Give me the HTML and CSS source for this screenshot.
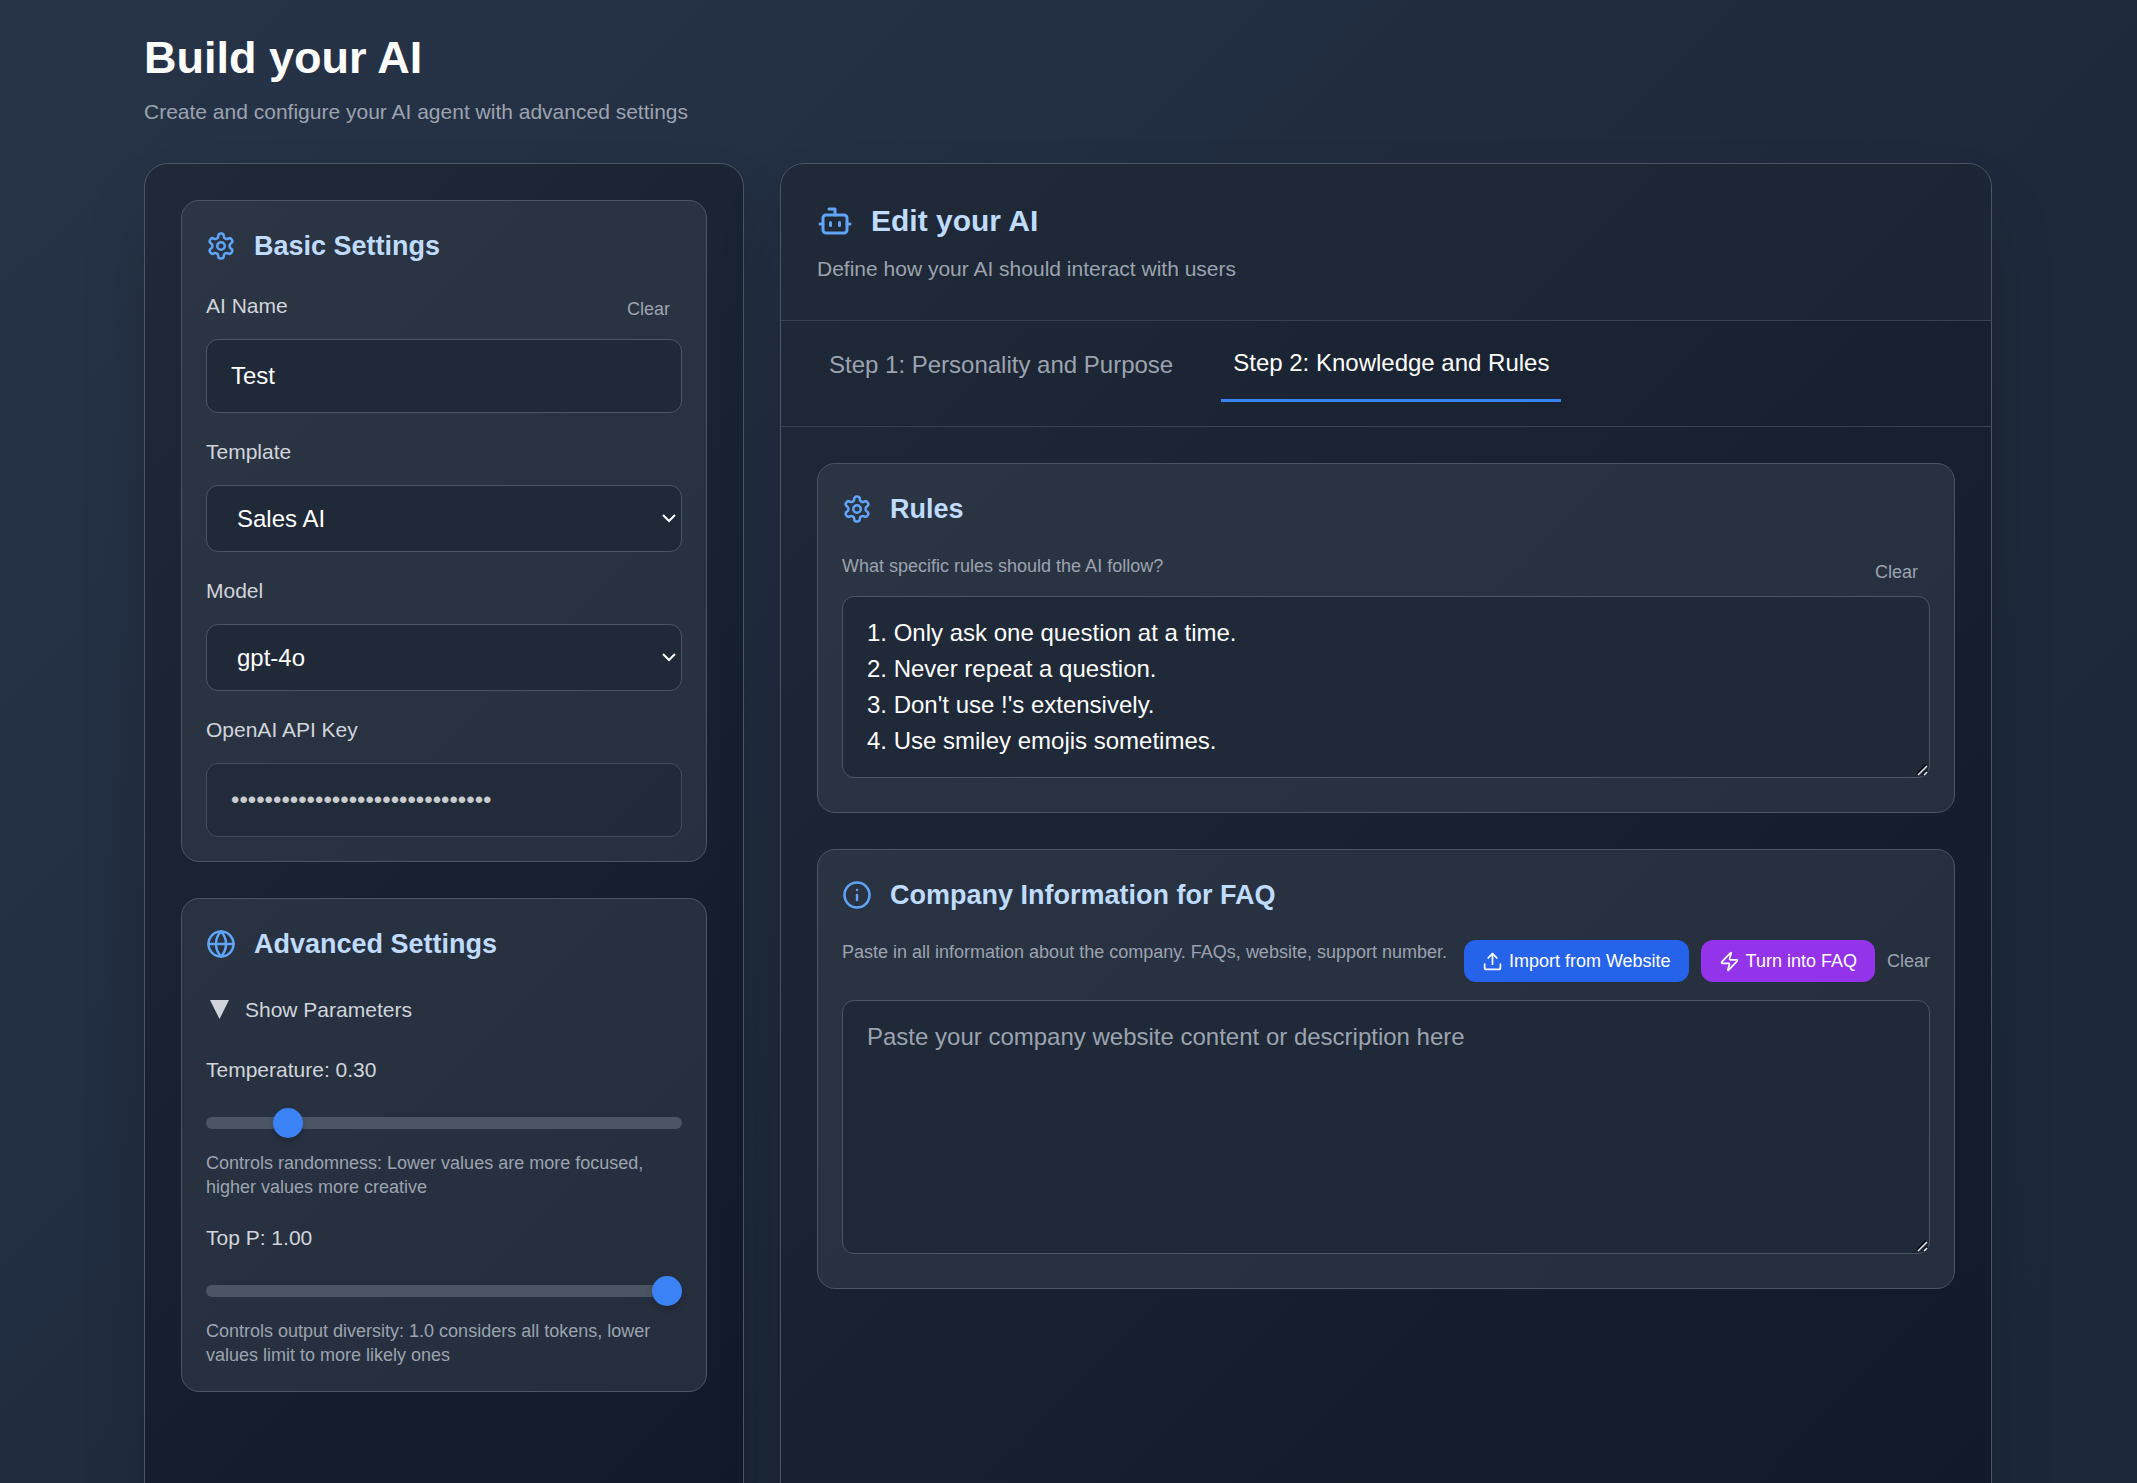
FILE: index.html
```html
<!DOCTYPE html>
<html lang="en">
<head>
<meta charset="utf-8">
<meta name="viewport" content="width=device-width, initial-scale=1">
<title>Build your AI</title>
<link rel="stylesheet" href="styles.css">
</head>
<body>
<svg class="sprite" aria-hidden="true">
  <symbol id="icon-gear" viewBox="0 0 24 24"><path d="M12.22 2h-.44a2 2 0 0 0-2 2v.18a2 2 0 0 1-1 1.73l-.43.25a2 2 0 0 1-2 0l-.15-.08a2 2 0 0 0-2.73.73l-.22.38a2 2 0 0 0 .73 2.73l.15.1a2 2 0 0 1 1 1.72v.51a2 2 0 0 1-1 1.74l-.15.09a2 2 0 0 0-.73 2.73l.22.38a2 2 0 0 0 2.73.73l.15-.08a2 2 0 0 1 2 0l.43.25a2 2 0 0 1 1 1.73V20a2 2 0 0 0 2 2h.44a2 2 0 0 0 2-2v-.18a2 2 0 0 1 1-1.73l.43-.25a2 2 0 0 1 2 0l.15.08a2 2 0 0 0 2.73-.73l.22-.39a2 2 0 0 0-.73-2.73l-.15-.08a2 2 0 0 1-1-1.74v-.5a2 2 0 0 1 1-1.74l.15-.09a2 2 0 0 0 .73-2.73l-.22-.38a2 2 0 0 0-2.73-.73l-.15.08a2 2 0 0 1-2 0l-.43-.25a2 2 0 0 1-1-1.73V4a2 2 0 0 0-2-2z"/><circle cx="12" cy="12" r="3"/></symbol>
  <symbol id="icon-globe" viewBox="0 0 24 24"><circle cx="12" cy="12" r="10"/><path d="M12 2a14.5 14.5 0 0 0 0 20 14.5 14.5 0 0 0 0-20"/><path d="M2 12h20"/></symbol>
  <symbol id="icon-bot" viewBox="0 0 24 24"><path d="M12 8V4H8"/><rect width="16" height="12" x="4" y="8" rx="2"/><path d="M2 14h2"/><path d="M20 14h2"/><path d="M15 13v2"/><path d="M9 13v2"/></symbol>
  <symbol id="icon-info" viewBox="0 0 24 24"><circle cx="12" cy="12" r="10"/><path d="M12 16v-4"/><path d="M12 8h.01"/></symbol>
  <symbol id="icon-upload" viewBox="0 0 24 24"><path d="M21 15v4a2 2 0 0 1-2 2H5a2 2 0 0 1-2-2v-4"/><path d="m17 8-5-5-5 5"/><path d="M12 3v12"/></symbol>
  <symbol id="icon-zap" viewBox="0 0 24 24"><path d="M4 14a1 1 0 0 1-.78-1.63l9.9-10.2a.5.5 0 0 1 .86.46l-1.92 6.02A1 1 0 0 0 13 10h7a1 1 0 0 1 .78 1.63l-9.9 10.2a.5.5 0 0 1-.86-.46l1.92-6.02A1 1 0 0 0 11 14z"/></symbol>
  <symbol id="icon-triangle" viewBox="0 0 30 30"><path d="M4 5h19l-9.500 19z" fill="currentColor" stroke="none"/></symbol>
</svg>

<div class="app">
  <main class="container">
    <header class="page-header">
      <h1 class="page-title">Build your AI</h1>
      <p class="subtitle">Create and configure your AI agent with advanced settings</p>
    </header>

    <div class="layout">
      <aside class="panel panel-settings">
        <section class="card">
          <h2 class="card-title"><svg class="icon"><use href="#icon-gear"/></svg>Basic Settings</h2>
          <div class="stack">
            <div>
              <div class="field-head">
                <label class="label" for="ai-name">AI Name</label>
                <button class="clear" type="button">Clear</button>
              </div>
              <input class="control" id="ai-name" type="text" value="Test">
            </div>
            <div>
              <label class="label label-block" for="template">Template</label>
              <select class="control select" id="template"><option>Sales AI</option></select>
            </div>
            <div>
              <label class="label label-block" for="model">Model</label>
              <select class="control select" id="model"><option>gpt-4o</option></select>
            </div>
            <div>
              <label class="label label-block" for="api-key">OpenAI API Key</label>
              <input class="control" id="api-key" type="password" value="0000000000000000000000000000000" disabled>
            </div>
          </div>
        </section>

        <section class="card">
          <h2 class="card-title"><svg class="icon"><use href="#icon-globe"/></svg>Advanced Settings</h2>
          <div class="stack">
            <button class="toggle" type="button" aria-expanded="true"><svg class="icon-toggle"><use href="#icon-triangle"/></svg>Show Parameters</button>
            <div>
              <label class="label label-block" for="temperature">Temperature: 0.30</label>
              <input class="slider" id="temperature" type="range" min="0" max="2" step="0.01" value="0.3">
              <p class="help">Controls randomness: Lower values are more focused, higher values more creative</p>
            </div>
            <div>
              <label class="label label-block" for="top-p">Top P: 1.00</label>
              <input class="slider" id="top-p" type="range" min="0" max="1" step="0.01" value="1">
              <p class="help">Controls output diversity: 1.0 considers all tokens, lower values limit to more likely ones</p>
            </div>
          </div>
        </section>
      </aside>

      <section class="panel">
        <header class="panel-header">
          <h2 class="panel-title"><svg class="icon icon-large"><use href="#icon-bot"/></svg>Edit your AI</h2>
          <p class="subtitle">Define how your AI should interact with users</p>
        </header>
        <nav class="tabs">
          <button class="tab" type="button">Step 1: Personality and Purpose</button>
          <button class="tab tab-active" type="button">Step 2: Knowledge and Rules</button>
        </nav>
        <div class="panel-body">
          <section class="card card-text">
            <h3 class="card-title"><svg class="icon"><use href="#icon-gear"/></svg>Rules</h3>
            <div class="field-head field-head-tight">
              <label class="help" for="rules">What specific rules should the AI follow?</label>
              <button class="clear" type="button">Clear</button>
            </div>
            <textarea class="control textarea" id="rules" rows="4">1. Only ask one question at a time.
2. Never repeat a question.
3. Don't use !'s extensively.
4. Use smiley emojis sometimes.</textarea>
          </section>

          <section class="card card-text">
            <h3 class="card-title"><svg class="icon"><use href="#icon-info"/></svg>Company Information for FAQ</h3>
            <div class="field-head field-head-loose">
              <label class="help" for="company">Paste in all information about the company. FAQs, website, support number.</label>
              <div class="actions">
                <button class="button button-blue" type="button"><svg class="icon-small"><use href="#icon-upload"/></svg>Import from Website</button>
                <button class="button button-purple" type="button"><svg class="icon-small"><use href="#icon-zap"/></svg>Turn into FAQ</button>
                <button class="clear clear-bare" type="button">Clear</button>
              </div>
            </div>
            <textarea class="control textarea" id="company" rows="6" placeholder="Paste your company website content or description here"></textarea>
          </section>
        </div>
      </section>
    </div>
  </main>
</div>
</body>
</html>
```
FILE: styles.css
```css
*, *::before, *::after {
  box-sizing: border-box;
}

body, h1, h2, h3, p {
  margin: 0;
}

body {
  font-family: "Liberation Sans", Arial, sans-serif;
  font-size: 24px;
  line-height: 36px;
  color: #fff;
  background: #1e293b;
}

button, input, select, textarea {
  margin: 0;
  font: inherit;
  color: inherit;
}

button {
  padding: 0;
  border: 0;
  background: none;
  cursor: pointer;
}

.sprite {
  display: none;
}

.app {
  height: 100vh;
  overflow-y: auto;
  scrollbar-width: none;
  background: linear-gradient(135deg, #273448, #1e293b 60%, #1c283a);
}

.container {
  max-width: 1921px;
  margin: 0 auto;
  padding: 31px 37px 36px 36px;
}

.page-header {
  margin-bottom: 36px;
}

.page-title {
  margin-bottom: 12px;
  font-size: 45px;
  line-height: 54px;
}

.subtitle {
  font-size: 21px;
  line-height: 30px;
  color: #9ca3af;
}

.layout {
  display: grid;
  grid-template-columns: 600px minmax(0, 1fr);
  gap: 36px;
  min-height: 100vh;
}

.panel {
  border: 1px solid #4b5563;
  border-radius: 24px;
  background: linear-gradient(135deg, #1f2937, #111827);
  box-shadow: 0 38px 75px -18px rgba(0, 0, 0, 0.25);
}

.panel-settings {
  padding: 36px;
}

.panel-header {
  padding: 36px;
  border-bottom: 1px solid #374151;
  border-radius: 24px 24px 0 0;
  background: rgba(31, 41, 55, 0.5);
}

.panel-title {
  display: flex;
  align-items: center;
  gap: 18px;
  margin-bottom: 12px;
  font-size: 30px;
  line-height: 42px;
  color: #bfdbfe;
}

.panel-body {
  padding: 36px;
}

.card {
  padding: 24px;
  border: 1px solid #4b5563;
  border-radius: 18px;
  background: rgba(55, 65, 81, 0.5);
}

.card + .card {
  margin-top: 36px;
}

.card-text {
  padding-bottom: 34px;
}

.card-title {
  display: flex;
  align-items: center;
  gap: 18px;
  margin-bottom: 24px;
  font-size: 27px;
  line-height: 42px;
  color: #bfdbfe;
}

.icon, .icon-small, .icon-toggle {
  flex: none;
  width: 30px;
  height: 30px;
  fill: none;
  stroke: currentColor;
  stroke-width: 2px;
  stroke-linecap: round;
  stroke-linejoin: round;
}

.icon {
  color: #60a5fa;
}

.icon-large {
  width: 36px;
  height: 36px;
}

.icon-small {
  width: 21px;
  height: 21px;
}

.stack {
  display: grid;
  gap: 24px;
}

.field-head {
  display: flex;
  justify-content: space-between;
  align-items: flex-start;
  margin-bottom: 12px;
}

.field-head-tight {
  margin-bottom: 6px;
}

.field-head-loose {
  margin-bottom: 18px;
}

.label {
  font-size: 21px;
  line-height: 30px;
  color: #d1d5db;
}

.label-block {
  display: block;
  margin-bottom: 18px;
}

.help {
  font-size: 18px;
  line-height: 24px;
  color: #9ca3af;
}

.clear {
  padding: 6px 12px;
  font-size: 18px;
  line-height: 24px;
  color: #9ca3af;
}

.clear-bare {
  padding: 0;
}

.control {
  display: block;
  width: 100%;
  padding: 18px 24px;
  border: 1px solid #4b5563;
  border-radius: 12px;
  background-color: #1f2937;
  line-height: 36px;
}

.control:disabled {
  opacity: 0.75;
}

.control::placeholder {
  color: #9ca3af;
}

.select {
  height: 67px;
  padding: 15px 28px 15px 30px;
  appearance: none;
  background-image: url("data:image/svg+xml,%3Csvg xmlns='http://www.w3.org/2000/svg' width='14' height='9' fill='none' stroke='white' stroke-width='2'%3E%3Cpath d='M1 1l6 6 6-6'/%3E%3C/svg%3E");
  background-repeat: no-repeat;
  background-position: right 5px center;
}

.textarea {
  resize: vertical;
}

.textarea::-webkit-resizer {
  background: url("data:image/svg+xml,%3Csvg xmlns='http://www.w3.org/2000/svg' width='12' height='12' fill='none'%3E%3Cpath d='M1 10L10 1M7 11l4-4' stroke='%23050a12' stroke-width='2'/%3E%3Cpath d='M2 11L11 2M8 11l3-3' stroke='%23e5e7eb' stroke-width='1.500'/%3E%3C/svg%3E") no-repeat right 1px bottom 1px;
}

.toggle {
  display: flex;
  align-items: center;
  gap: 9px;
  font-size: 21px;
  line-height: 42px;
  color: #d1d5db;
}

.slider {
  display: block;
  width: 100%;
  height: 40px;
  margin-bottom: 8px;
  appearance: none;
  background: none;
}

.slider::-webkit-slider-runnable-track {
  height: 12px;
  border-radius: 6px;
  background: #4b5563;
}

.slider::-webkit-slider-thumb {
  width: 30px;
  height: 30px;
  margin-top: -9px;
  appearance: none;
  border-radius: 50%;
  background: #3b82f6;
  box-shadow: 0 3px 6px rgba(0, 0, 0, 0.2);
}

.tabs {
  display: flex;
  gap: 36px;
  padding: 24px 36px;
  border-bottom: 1px solid #374151;
}

.tab {
  padding: 0 12px 18px;
  color: #9ca3af;
}

.tab-active {
  border-bottom: 3px solid #3b82f6;
  color: #fff;
}

.actions {
  display: flex;
  align-items: center;
  gap: 12px;
}

.button {
  display: flex;
  align-items: center;
  gap: 6px;
  padding: 9px 18px;
  border-radius: 12px;
  font-size: 18px;
  line-height: 24px;
}

.button-blue {
  background: #2563eb;
}

.button-purple {
  background: #9333ea;
}
```
